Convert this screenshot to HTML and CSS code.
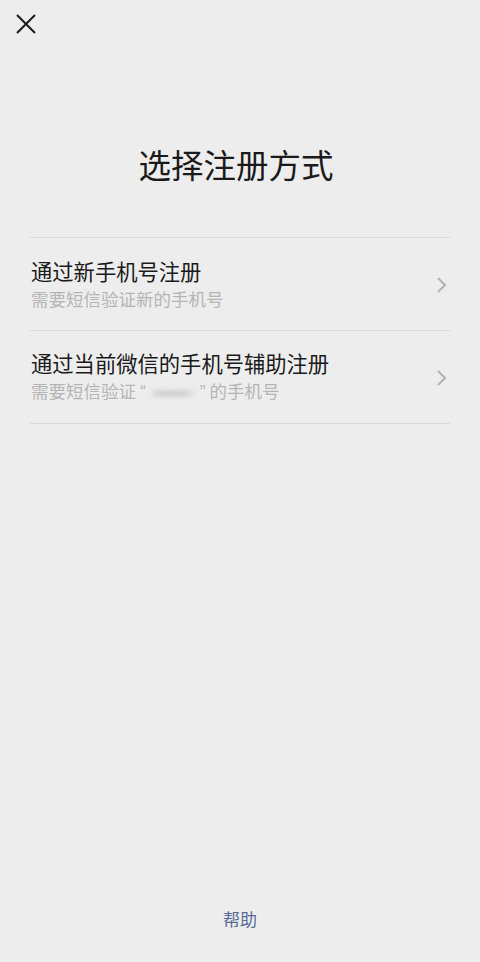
FILE: index.html
```html
<!DOCTYPE html>
<html lang="zh-CN">
<head>
    <meta charset="UTF-8">
    <meta name="viewport" content="width=device-width, initial-scale=1.0">
    <title>选择注册方式</title>
    <link rel="stylesheet" href="styles.css">
</head>
<body>
    <div class="page">
        <div class="topbar">
            <svg class="close" width="22" height="22" viewBox="0 0 22 22">
                <path d="M2 2 L20 20 M20 2 L2 20" stroke="#1a1a1a" stroke-width="2" fill="none"/>
            </svg>
        </div>

        <h1 class="title">选择注册方式</h1>

        <div class="options">
            <div class="option">
                <div class="option-text">
                    <div class="option-title">通过新手机号注册</div>
                    <div class="option-desc">需要短信验证新的手机号</div>
                </div>
                <svg class="arrow" width="12" height="18" viewBox="0 0 12 18">
                    <path d="M2 2 L9 9 L2 16" stroke="#b2b2b2" stroke-width="2" fill="none"/>
                </svg>
            </div>
            <div class="option">
                <div class="option-text">
                    <div class="option-title">通过当前微信的手机号辅助注册</div>
                    <div class="option-desc">需要短信验证 <span class="quote">“</span><span class="masked">1**</span><span class="quote">”</span> 的手机号</div>
                </div>
                <svg class="arrow" width="12" height="18" viewBox="0 0 12 18">
                    <path d="M2 2 L9 9 L2 16" stroke="#b2b2b2" stroke-width="2" fill="none"/>
                </svg>
            </div>
        </div>

        <div class="spacer"></div>

        <div class="help">帮助</div>
    </div>
</body>
</html>
```

FILE: styles.css
```css
body {
    margin: 0;
    background: #ededed;
    font-family: "Noto Sans CJK SC", "Noto Sans", sans-serif;
}

.page {
    min-height: 962px;
    display: flex;
    flex-direction: column;
}

.topbar {
    height: 48px;
    padding: 13px 0 0 15px;
    box-sizing: border-box;
}

.close {
    display: block;
}

.title {
    margin: 94px 8px 0 0;
    text-align: center;
    font-size: 32.5px;
    font-weight: normal;
    line-height: 44px;
    color: #1a1a1a;
}

.options {
    margin: 51px 30px 0;
    border-top: 1px solid #dadada;
}

.option {
    height: 92px;
    border-bottom: 1px solid #dadada;
    display: flex;
    align-items: center;
    padding: 0 2px 0 1px;
}

.option-text {
    flex: 1;
    padding-top: 1px;
}

.option-title {
    font-size: 21.3px;
    line-height: 28px;
    color: #1a1a1a;
}

.option-desc {
    font-size: 17.5px;
    line-height: 28px;
    color: #b5b5b5;
}

.quote {
    font-family: "Liberation Sans", sans-serif;
}

.masked {
    display: inline-block;
    width: 47px;
    margin: 0 3px 0 4px;
    color: transparent;
    filter: blur(2.5px);
    background: linear-gradient(90deg, transparent 0, #c8c8c8 15%, #c4c4c4 70%, transparent 100%);
    height: 5px;
    vertical-align: middle;
}

.arrow {
    display: block;
    margin-top: 2px;
}

.spacer {
    flex: 1;
}

.help {
    text-align: center;
    font-size: 17px;
    line-height: 24px;
    color: #576b95;
    margin-bottom: 31px;
}
```
